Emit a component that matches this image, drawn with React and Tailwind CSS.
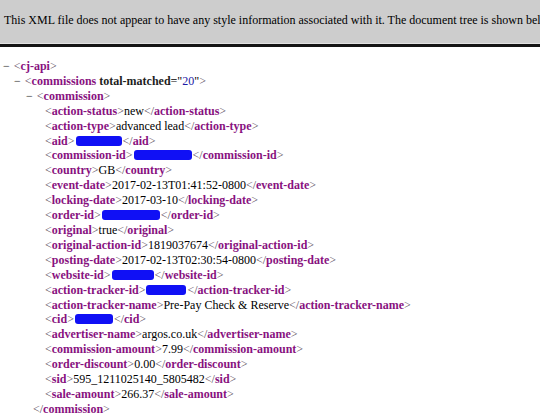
import React from "react";

const Redacted = ({ w }) => (
  <span
    className="mx-[1px] inline-block h-[10px] translate-y-[1px] rounded-[3px] bg-[#1010f5]"
    style={{ width: w }}
  />
);

const Open = ({ name, children }) => (
  <>
    <span className="text-[#5a4a5a]">&lt;</span>
    <span className="font-bold text-[#881280]">{name}</span>
    {children}
    <span className="text-[#5a4a5a]">&gt;</span>
  </>
);

const Close = ({ name }) => (
  <>
    <span className="text-[#5a4a5a]">&lt;/</span>
    <span className="font-bold text-[#881280]">{name}</span>
    <span className="text-[#5a4a5a]">&gt;</span>
  </>
);

const leaves = [
  ["action-status", "new"],
  ["action-type", "advanced lead"],
  ["aid", 46],
  ["commission-id", 58],
  ["country", "GB"],
  ["event-date", "2017-02-13T01:41:52-0800"],
  ["locking-date", "2017-03-10"],
  ["order-id", 58],
  ["original", "true"],
  ["original-action-id", "1819037674"],
  ["posting-date", "2017-02-13T02:30:54-0800"],
  ["website-id", 42],
  ["action-tracker-id", 40],
  ["action-tracker-name", "Pre-Pay Check & Reserve"],
  ["cid", 38],
  ["advertiser-name", "argos.co.uk"],
  ["commission-amount", "7.99"],
  ["order-discount", "0.00"],
  ["sid", "595_1211025140_5805482"],
  ["sale-amount", "266.37"],
];

const Toggle = () => <span className="mr-[4px] text-[#333]">−</span>;

export default function App() {
  return (
    <div className="h-[418px] w-[540px] overflow-hidden bg-white font-['Liberation_Serif','Times_New_Roman',serif] text-[12px] text-black">
      <div className="border-b-[3px] border-[#141414]">
        <div className="flex h-[44px] items-center overflow-hidden border-b border-[#e2e2e2] bg-[#cdcdcd] pl-[4px] pb-[3px]">
          <p className="whitespace-nowrap">
            This XML file does not appear to have any style information
            associated with it. The document tree is shown below.
          </p>
        </div>
      </div>

      <div className="mt-[12px] leading-[14.9px]">
        <div className="whitespace-nowrap pl-[3px]">
          <Toggle />
          <Open name="cj-api" />
        </div>
        <div className="whitespace-nowrap pl-[14px]">
          <Toggle />
          <Open name="commissions">
            <span className="font-bold text-[#1d1d1d]"> total-matched</span>
            <span>="</span>
            <span className="text-[#1a1aa6]">20</span>
            <span>"</span>
          </Open>
        </div>
        <div className="whitespace-nowrap pl-[26px]">
          <Toggle />
          <Open name="commission" />
        </div>
        {leaves.map(([name, value]) => (
          <div key={name} className="whitespace-nowrap pl-[45px]">
            <Open name={name} />
            {typeof value === "number" ? <Redacted w={value} /> : <span>{value}</span>}
            <Close name={name} />
          </div>
        ))}
        <div className="whitespace-nowrap pl-[33px]">
          <Close name="commission" />
        </div>
      </div>
    </div>
  );
}
